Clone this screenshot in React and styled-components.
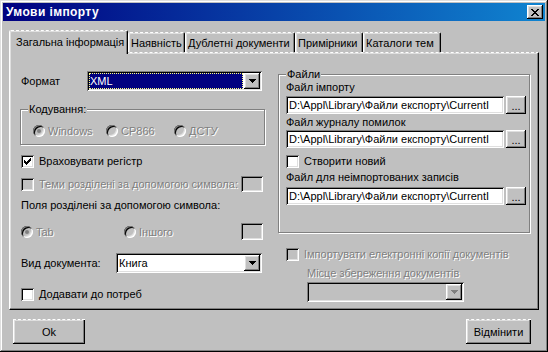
import React from "react";
import styled, { createGlobalStyle, css } from "styled-components";

const GlobalStyle = createGlobalStyle`
  html, body { margin: 0; padding: 0; background: #c0c0c0; }
  body {
    font-family: "Liberation Sans", Arial, sans-serif;
    font-size: 11px;
    color: #000;
  }
  * { box-sizing: border-box; }
`;

const raised = css`
  box-shadow: inset -1px -1px #000, inset 1px 1px #fff, inset -2px -2px #808080, inset 2px 2px #dfdfdf;
`;

const sunken = css`
  box-shadow: inset 1px 1px #808080, inset -1px -1px #fff, inset 2px 2px #000, inset -2px -2px #dfdfdf;
`;

const disabledText = css`
  color: #808080;
  text-shadow: 1px 1px 0 #fff;
`;

const Window = styled.div`
  width: 548px;
  height: 352px;
  padding: 3px;
  background: #c0c0c0;
  box-shadow: inset -1px -1px #000, inset 1px 1px #dfdfdf, inset -2px -2px #808080, inset 2px 2px #fff;
  display: flex;
  flex-direction: column;
`;

const TitleBar = styled.div`
  height: 18px;
  flex: none;
  background: linear-gradient(to right, #000080, #1084d0);
  display: flex;
  align-items: center;
  justify-content: space-between;
  padding: 0 2px 0 3px;
`;

const Title = styled.span`
  color: #fff;
  font-weight: bold;
  font-size: 12px;
  letter-spacing: 0.4px;
`;

const CloseButton = styled.div`
  width: 16px;
  height: 14px;
  background: #c0c0c0;
  ${raised};
  display: flex;
  align-items: center;
  justify-content: center;
`;

const TabStrip = styled.div`
  margin: 9px 6px 0 6px;
  height: 22px;
  display: flex;
  align-items: flex-end;
  flex: none;
`;

const Tab = styled.div`
  width: ${p => p.$w}px;
  height: ${p => (p.$active ? 24 : 20)}px;
  margin-bottom: ${p => (p.$active ? -2 : 0)}px;
  position: relative;
  z-index: ${p => (p.$active ? 2 : 0)};
  background: #c0c0c0;
  border-top: 1px dashed #fff;
  border-left: 1px solid #fff;
  border-right: 1px solid #000;
  border-radius: 2px 2px 0 0;
  box-shadow: inset -1px 0 #808080, inset 1px 1px #dfdfdf;
  display: flex;
  align-items: center;
  padding: 0 0 ${p => (p.$active ? 2 : 0)}px ${p => (p.$active ? 6 : 2)}px;
  white-space: nowrap;
`;

const Panel = styled.div`
  margin: 0 6px;
  height: 258px;
  flex: none;
  position: relative;
  z-index: 1;
  border-top: 1px dashed #fff;
  border-left: 1px solid #fff;
  border-right: 1px solid #000;
  border-bottom: 1px solid #000;
  box-shadow: inset -1px -1px #808080, inset 1px 1px #dfdfdf;
  padding: 18px 8px 0 10px;
  display: grid;
  grid-template-columns: 245px 252px;
  column-gap: 13px;
  align-items: start;
`;

const Column = styled.div`
  display: flex;
  flex-direction: column;
`;

const Row = styled.div`
  display: flex;
  align-items: center;
  height: ${p => p.$h || 16}px;
  margin-top: ${p => p.$mt || 0}px;
  padding-left: ${p => (p.$pl === undefined ? 1 : p.$pl)}px;
  padding-right: ${p => p.$pr || 0}px;
  white-space: nowrap;
`;

const FieldLabel = styled.span`
  width: ${p => (p.$w ? `${p.$w}px` : "auto")};
  flex: none;
  ${p => p.$disabled && disabledText};
`;

const ComboFrame = styled.div`
  width: ${p => p.$w}px;
  height: 20px;
  padding: 2px;
  display: flex;
  background: ${p => (p.$disabled ? "#c0c0c0" : "#fff")};
  ${sunken};
`;

const ComboValue = styled.div`
  flex: 1;
  margin-right: 1px;
  line-height: 16px;
  padding-left: 1px;
  overflow: hidden;
  ${p =>
    p.$selected &&
    css`
      background: #000080;
      color: #fff;
      outline: 1px dotted #ffff80;
      outline-offset: -1px;
    `};
`;

const DropButton = styled.div`
  width: 16px;
  height: 16px;
  flex: none;
  background: #c0c0c0;
  ${raised};
  display: flex;
  align-items: center;
  justify-content: center;
`;

const CheckBox = styled.span`
  width: 13px;
  height: 13px;
  flex: none;
  margin-right: 5px;
  background: ${p => (p.$disabled ? "#c0c0c0" : "#fff")};
  ${sunken};
  display: flex;
  align-items: center;
  justify-content: center;
`;

const RadioCircle = styled.span`
  width: 12px;
  height: 12px;
  flex: none;
  margin-right: 3px;
  border-radius: 50%;
  background: ${p => (p.$disabled ? "#c0c0c0" : "#fff")};
  ${sunken};
  display: flex;
  align-items: center;
  justify-content: center;
  &::after {
    content: "";
    display: ${p => (p.$checked ? "block" : "none")};
    width: 4px;
    height: 4px;
    border-radius: 50%;
    background: ${p => (p.$disabled ? "#808080" : "#000")};
  }
`;

const RadioItem = styled.div`
  display: flex;
  align-items: center;
  width: ${p => (p.$w ? `${p.$w}px` : "auto")};
  flex: none;
`;

const SmallBox = styled.div`
  width: 22px;
  height: ${p => p.$h || 16}px;
  flex: none;
  margin-left: auto;
  background: #c0c0c0;
  ${sunken};
`;

const GroupBox = styled.div`
  position: relative;
  height: ${p => p.$h}px;
  margin-top: ${p => p.$mt || 0}px;
  border: 1px solid #808080;
  box-shadow: inset 1px 1px #fff, 1px 1px #fff;
  padding: ${p => p.$pad};
`;

const GroupCaption = styled.span`
  position: absolute;
  top: -8px;
  left: ${p => p.$left}px;
  padding: 0 1px;
  line-height: 14px;
  background: #c0c0c0;
`;

const TextField = styled.div`
  width: 218px;
  height: 18px;
  flex: none;
  background: #fff;
  ${sunken};
  padding: 2px 2px 0 3px;
  line-height: 14px;
  overflow: hidden;
  white-space: nowrap;
`;

const BrowseButton = styled.div`
  width: 20px;
  height: 18px;
  flex: none;
  margin-left: 2px;
  background: #c0c0c0;
  ${raised};
  display: flex;
  align-items: flex-end;
  justify-content: center;
  padding-bottom: 3px;
  line-height: 10px;
`;

const Footer = styled.div`
  margin-top: 9px;
  padding: 0 14px 0 10px;
  display: flex;
  justify-content: space-between;
`;

const PushButton = styled.div`
  width: ${p => p.$w}px;
  height: 25px;
  background: #c0c0c0;
  border-top: 1px dashed #fff;
  box-shadow: inset -1px -1px #000, inset 1px 0 #fff, inset -2px -2px #808080, inset 2px 1px #dfdfdf;
  display: flex;
  align-items: center;
  justify-content: center;
  padding-bottom: 1px;
`;

const Arrow = ({ color = "#000" }) => (
  <svg width="7" height="4" viewBox="0 0 7 4">
    <path d="M0 0h7L3.5 4z" fill={color} shapeRendering="crispEdges" />
  </svg>
);

const CheckMark = () => (
  <svg width="7" height="7" viewBox="0 0 7 7" shapeRendering="crispEdges">
    <path
      d="M6 0h1v3h-1v1h-1v1h-1v1h-1v1h-1v-1h-1v-1h-1v-3h1v1h1v1h1v-1h1v-1h1z"
      fill="#000"
    />
  </svg>
);

const ComboBox = ({ width, value, selected, disabled }) => (
  <ComboFrame $w={width} $disabled={disabled}>
    <ComboValue $selected={selected}>{value}</ComboValue>
    <DropButton>
      <Arrow color={disabled ? "#808080" : "#000"} />
    </DropButton>
  </ComboFrame>
);

const Check = ({ checked, disabled, children }) => (
  <>
    <CheckBox $disabled={disabled}>{checked && <CheckMark />}</CheckBox>
    <FieldLabel $disabled={disabled}>{children}</FieldLabel>
  </>
);

const Radio = ({ w, checked, disabled, children }) => (
  <RadioItem $w={w}>
    <RadioCircle $checked={checked} $disabled={disabled} />
    <FieldLabel $disabled={disabled}>{children}</FieldLabel>
  </RadioItem>
);

const FilePicker = ({ mt, value }) => (
  <Row $h={18} $mt={mt} $pl={0}>
    <TextField>{value}</TextField>
    <BrowseButton>...</BrowseButton>
  </Row>
);

const tabs = [
  { label: "Загальна інформація", w: 119, active: true },
  { label: "Наявність", w: 57 },
  { label: "Дублетні документи", w: 110 },
  { label: "Примірники", w: 68 },
  { label: "Каталоги тем", w: 78 },
];

const path = "D:\\Appl\\Library\\Файли експорту\\CurrentI";

export default function App() {
  return (
    <>
      <GlobalStyle />
      <Window>
        <TitleBar>
          <Title>Умови імпорту</Title>
          <CloseButton>
            <svg width="8" height="7" viewBox="0 0 8 7" shapeRendering="crispEdges">
              <path
                d="M0 0h2v1h1v1h2v-1h1v-1h2v1h-1v1h-1v1h-1v1h1v1h1v1h1v1h-2v-1h-1v-1h-2v1h-1v1h-2v-1h1v-1h1v-1h1v-1h-1v-1h-1v-1h-1z"
                fill="#000"
              />
            </svg>
          </CloseButton>
        </TitleBar>

        <TabStrip>
          {tabs.map(t => (
            <Tab key={t.label} $w={t.w} $active={t.active}>
              {t.label}
            </Tab>
          ))}
        </TabStrip>

        <Panel>
          <Column>
            <Row $h={20}>
              <FieldLabel $w={66}>Формат</FieldLabel>
              <ComboBox width={175} value="XML" selected />
            </Row>

            <GroupBox $h={36} $mt={18} $pad="14px 0 0 12px">
              <GroupCaption $left={7}>Кодування:</GroupCaption>
              <Row $h={13} $pl={0}>
                <Radio w={73} checked disabled>Windows</Radio>
                <Radio w={68} disabled>CP866</Radio>
                <Radio disabled>ДСТУ</Radio>
              </Row>
            </GroupBox>

            <Row $mt={8}>
              <Check checked>Враховувати регістр</Check>
            </Row>

            <Row $mt={7} $pr={2}>
              <Check disabled>Теми розділені за допомогою символа:</Check>
              <SmallBox />
            </Row>

            <Row $mt={5}>
              <FieldLabel>Поля розділені за допомогою символа:</FieldLabel>
            </Row>

            <Row $h={17} $mt={10} $pr={2}>
              <Radio w={103} checked disabled>Tab</Radio>
              <Radio disabled>Іншого</Radio>
              <SmallBox $h={17} />
            </Row>

            <Row $h={20} $mt={13}>
              <FieldLabel $w={95}>Вид документа:</FieldLabel>
              <ComboBox width={146} value="Книга" />
            </Row>

            <Row $mt={13}>
              <Check>Додавати до потреб</Check>
            </Row>
          </Column>

          <Column>
            <GroupBox $h={159} $mt={3} $pad="5px 0 0 7px">
              <GroupCaption $left={7}>Файли</GroupCaption>
              <Row $h={14} $pl={0}>
                <FieldLabel>Файл імпорту</FieldLabel>
              </Row>
              <FilePicker mt={2} value={path} />
              <Row $h={14} $mt={1} $pl={0}>
                <FieldLabel>Файл журналу помилок</FieldLabel>
              </Row>
              <FilePicker mt={1} value={path} />
              <Row $mt={5} $pl={0}>
                <Check>Створити новий</Check>
              </Row>
              <Row $h={14} $mt={1} $pl={0}>
                <FieldLabel>Файл для неімпортованих записів</FieldLabel>
              </Row>
              <FilePicker mt={3} value={path} />
            </GroupBox>

            <Row $mt={13} $pl={8}>
              <Check disabled>Імпортувати електронні копії документів</Check>
            </Row>
            <Row $h={14} $mt={4} $pl={29}>
              <FieldLabel $disabled>Місце збереження документів</FieldLabel>
            </Row>
            <Row $h={20} $mt={2} $pl={29}>
              <ComboBox width={157} value="" disabled />
            </Row>
          </Column>
        </Panel>

        <Footer>
          <PushButton $w={72}>Ok</PushButton>
          <PushButton $w={65}>Відмінити</PushButton>
        </Footer>
      </Window>
    </>
  );
}
